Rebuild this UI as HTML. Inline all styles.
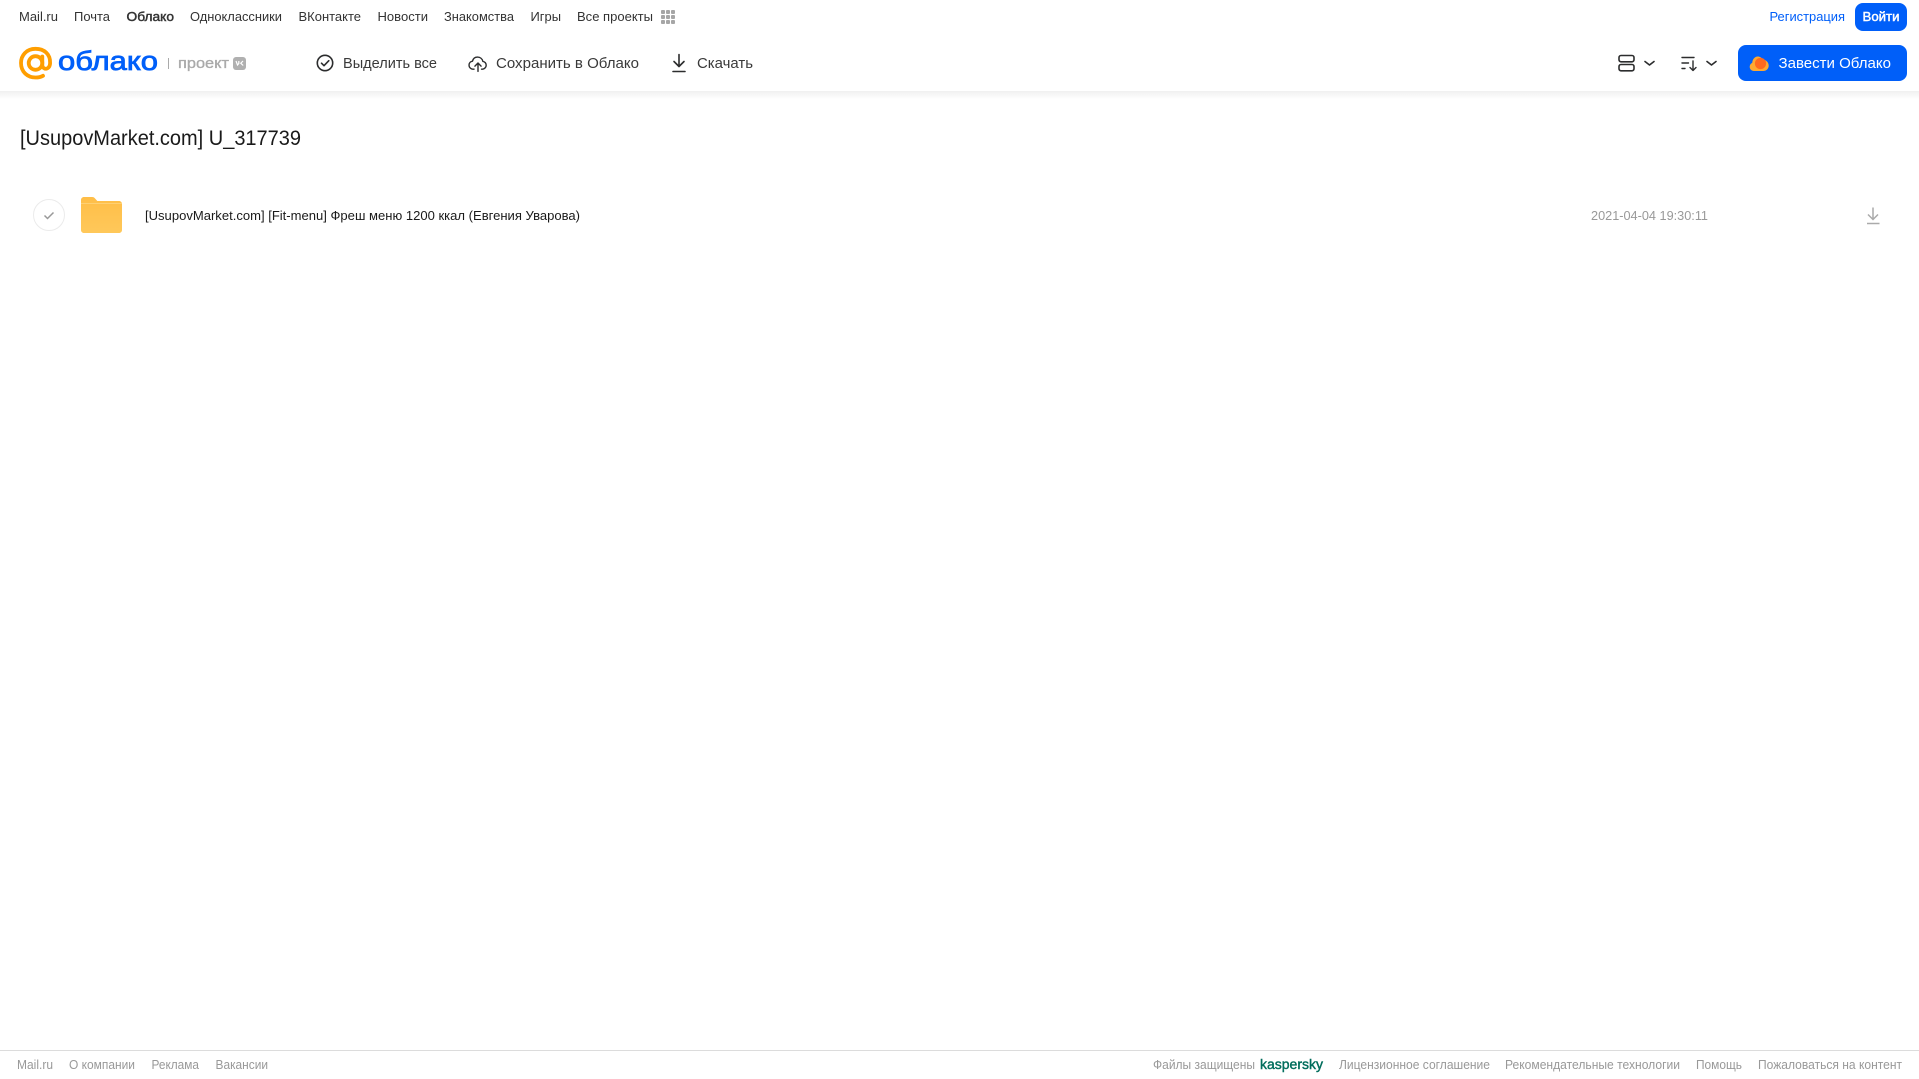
<!DOCTYPE html>
<html lang="ru"><head><meta charset="utf-8"><title>Облако</title>
<style>
html,body{margin:0;padding:0;background:#fff;width:1919px;height:1079px;overflow:hidden}
svg{display:block;position:absolute;left:0;top:0}
text{font-family:"Liberation Sans","Noto Sans CJK SC",sans-serif}
.n{font-size:13px;fill:#333}
.t{font-size:14.5px;fill:#3a3a3a}
.f{font-size:12.5px;fill:#999}
</style></head><body>
<svg width="1919" height="1079" viewBox="0 0 1919 1079" xmlns="http://www.w3.org/2000/svg">
<defs>
<linearGradient id="s" x1="0" y1="0" x2="0" y2="1"><stop offset="0" stop-color="#f0f0f0"/><stop offset="1" stop-color="#fff"/></linearGradient>
<linearGradient id="fo" x1="0" y1="0" x2="0" y2="1"><stop offset="0" stop-color="#ffbe47"/><stop offset="1" stop-color="#ffc85a"/></linearGradient>
</defs>
<rect x="0" y="91" width="1919" height="8" fill="url(#s)"/>
<!-- top nav -->
<text class="n" x="19" y="21" textLength="39" lengthAdjust="spacingAndGlyphs">Mail.ru</text>
<text class="n" x="74" y="21" textLength="36" lengthAdjust="spacingAndGlyphs">Почта</text>
<text class="n" x="126.500" y="21" textLength="47.500" lengthAdjust="spacingAndGlyphs" stroke="#333" stroke-width=".45">Облако</text>
<text class="n" x="190" y="21" textLength="92" lengthAdjust="spacingAndGlyphs">Одноклассники</text>
<text class="n" x="298.500" y="21" textLength="62.500" lengthAdjust="spacingAndGlyphs">ВКонтакте</text>
<text class="n" x="377.500" y="21" textLength="50.500" lengthAdjust="spacingAndGlyphs">Новости</text>
<text class="n" x="444" y="21" textLength="70" lengthAdjust="spacingAndGlyphs">Знакомства</text>
<text class="n" x="530.500" y="21" textLength="30.500" lengthAdjust="spacingAndGlyphs">Игры</text>
<text class="n" x="577" y="21" textLength="76" lengthAdjust="spacingAndGlyphs">Все проекты</text>
<g fill="#a6a6a6"><rect x="661" y="10" width="4" height="4" rx="1"/><rect x="666" y="10" width="4" height="4" rx="1"/><rect x="671" y="10" width="4" height="4" rx="1"/><rect x="661" y="15" width="4" height="4" rx="1"/><rect x="666" y="15" width="4" height="4" rx="1"/><rect x="671" y="15" width="4" height="4" rx="1"/><rect x="661" y="20" width="4" height="4" rx="1"/><rect x="666" y="20" width="4" height="4" rx="1"/><rect x="671" y="20" width="4" height="4" rx="1"/></g>
<text x="1769.500" y="21" font-size="13" fill="#005ff9" textLength="75.500" lengthAdjust="spacingAndGlyphs">Регистрация</text>
<rect x="1855" y="3" width="52" height="28" rx="8" fill="#005ff9"/>
<text x="1862.500" y="21" font-size="13" fill="#fff" stroke="#fff" stroke-width=".45" textLength="37" lengthAdjust="spacingAndGlyphs">Войти</text>
<!-- logo -->
<g fill="none" stroke="#ff9e00" stroke-width="3.800" stroke-linecap="round">
<circle cx="35.500" cy="63" r="6.800"/>
<path d="M42.300 56.500v8.500c0 5 7.500 5.600 7.800-2 .3-9-6-14.200-14.600-14.200C26.500 48.800 21 55.300 21 63c0 9 6.500 14.500 14.500 14.500 3 0 5.500-.6 7.500-1.700"/>
</g>
<text x="58" y="70" font-size="27" fill="#005ff9" stroke="#005ff9" stroke-width=".8" textLength="100" lengthAdjust="spacingAndGlyphs">облако</text>
<rect x="168" y="58" width="1" height="11" fill="#aaa"/>
<text x="178" y="68" font-size="15" fill="#aaa" stroke="#aaa" stroke-width=".35" textLength="51" lengthAdjust="spacingAndGlyphs">проект</text>
<rect x="233" y="57" width="13" height="13" rx="3" fill="#b0b0b0"/>
<path d="M236 61l1.500 4 1.300-1.500V61M243 61l-2.200 2.200 2.400 2.300" fill="none" stroke="#fff" stroke-width="1.200"/>
<!-- toolbar -->
<g fill="none" stroke="#2c2d2e" stroke-width="1.600" stroke-linecap="round" stroke-linejoin="round">
<circle cx="325" cy="63" r="7.700"/><path d="M321.500 63.200l2.500 2.500 4.800-5"/>
<g transform="translate(478 63) scale(.88) translate(-478 -63)"><path d="M473.500 70h-1.500c-2.600-.2-4.200-2.300-4.200-4.600 0-2.400 1.700-4.200 3.900-4.500.8-2.900 3.100-4.600 5.800-4.600 3 0 5.400 2 6 4.900 2.200.2 3.800 2.100 3.800 4.300 0 2.400-1.800 4.300-4.200 4.500h-1.100"/>
<path d="M478 72.500v-9M474.500 66.500l3.500-3.500 3.500 3.500"/></g>
<path d="M679 54.500v11.500M674 61.500l5 5 5-5M673 71.500h12"/>
<rect x="1619" y="55.500" width="15" height="6.300" rx="2"/><rect x="1619" y="64.500" width="15" height="6.300" rx="2"/>
<path d="M1645 61.500l4.500 3.500 4.500-3.500M1707 61.500l4.500 3.500 4.500-3.500"/>
<path d="M1682 57.500h12M1682 63h6.500M1682 68.500h3M1693 61v9M1690 67.500l3 3 3-3" stroke-width="1.400"/>
</g>
<text class="t" x="343" y="68" textLength="94" lengthAdjust="spacingAndGlyphs">Выделить все</text>
<text class="t" x="496" y="68" textLength="143" lengthAdjust="spacingAndGlyphs">Сохранить в Облако</text>
<text class="t" x="697" y="68" textLength="56" lengthAdjust="spacingAndGlyphs">Скачать</text>
<!-- CTA -->
<rect x="1738" y="45" width="169" height="36" rx="8" fill="#005ff9"/>
<path d="M1754 71c-2.600 0-4.300-1.900-4.300-4.200 0-1.800 1-3.300 2.500-3.900.3-3.600 2.500-6.400 5.500-6.400 2.300 0 4 1.200 5 3 3.500.3 6 3 6 6.100 0 3-2.300 5.400-5.600 5.400z" fill="#ffa930"/>
<circle cx="1760.500" cy="63.500" r="5.600" fill="#ff6a1f"/>
<text x="1778.500" y="68" font-size="14.500" fill="#fff" textLength="112.500" lengthAdjust="spacingAndGlyphs">Завести Облако</text>
<!-- title -->
<text x="20" y="145" font-size="21" fill="#1a1a1a" textLength="281" lengthAdjust="spacingAndGlyphs">[UsupovMarket.com] U_317739</text>
<!-- row -->
<circle cx="49" cy="215" r="15.500" fill="#fff" stroke="#ebebeb" stroke-width="1"/>
<path d="M44.500 215.500l3 3 6-6" fill="none" stroke="#999" stroke-width="1.500"/>
<path d="M81 200c0-1.700 1.300-3 3-3h8c1.500 0 2.400.6 3.300 1.700l2 2.300H119c1.700 0 3 1.300 3 3v26c0 1.700-1.300 3-3 3H84c-1.700 0-3-1.300-3-3z" fill="url(#fo)"/>
<rect x="81" y="203" width="41" height="1" fill="#ffd37c" opacity=".8"/>
<text x="145" y="220" font-size="13" fill="#1a1a1a" textLength="435" lengthAdjust="spacingAndGlyphs">[UsupovMarket.com] [Fit-menu] Фреш меню 1200 ккал (Евгения Уварова)</text>
<text x="1591" y="220" font-size="13" fill="#999" textLength="117" lengthAdjust="spacingAndGlyphs">2021-04-04 19:30:11</text>
<path d="M1873 207.500v12M1868 214.500l5 5 5-5M1867 223.500h12.500" fill="none" stroke="#aaa" stroke-width="1.500"/>
<!-- footer -->
<rect x="0" y="1050" width="1919" height="1" fill="#dcdcdc"/>
<text class="f" x="17" y="1069" textLength="36" lengthAdjust="spacingAndGlyphs">Mail.ru</text>
<text class="f" x="69" y="1069" textLength="66" lengthAdjust="spacingAndGlyphs">О компании</text>
<text class="f" x="151.500" y="1069" textLength="47.500" lengthAdjust="spacingAndGlyphs">Реклама</text>
<text class="f" x="215.500" y="1069" textLength="52.500" lengthAdjust="spacingAndGlyphs">Вакансии</text>
<text class="f" x="1153" y="1069" textLength="102" lengthAdjust="spacingAndGlyphs">Файлы защищены</text>
<text x="1260" y="1069" font-size="13.500" fill="#006d5c" stroke="#006d5c" stroke-width=".4" textLength="63" lengthAdjust="spacingAndGlyphs">kaspersky</text>
<text class="f" x="1339" y="1069" textLength="151" lengthAdjust="spacingAndGlyphs">Лицензионное соглашение</text>
<text class="f" x="1505" y="1069" textLength="175" lengthAdjust="spacingAndGlyphs">Рекомендательные технологии</text>
<text class="f" x="1696" y="1069" textLength="46" lengthAdjust="spacingAndGlyphs">Помощь</text>
<text class="f" x="1758" y="1069" textLength="144" lengthAdjust="spacingAndGlyphs">Пожаловаться на контент</text>
</svg>
</body></html>
